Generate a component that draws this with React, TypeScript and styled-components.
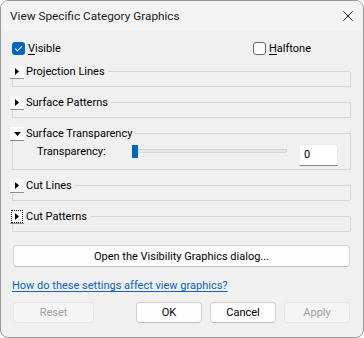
import React from "react";
import styled, { createGlobalStyle } from "styled-components";

const GlobalStyle = createGlobalStyle`
    html, body {
        margin: 0;
        padding: 0;
        background: #ffffff;
    }
    * {
        box-sizing: border-box;
    }
`;

type Section = {
    title: string;
    open?: boolean;
    focused?: boolean;
};

const sections: Section[] = [
    { title: "Projection Lines" },
    { title: "Surface Patterns" },
    { title: "Surface Transparency", open: true },
    { title: "Cut Lines" },
    { title: "Cut Patterns", focused: true },
];

function CheckMark() {
    return (
        <svg width="13" height="13" viewBox="0 0 13 13">
            <path d="M3.2 6.6 L5.4 8.8 L9.9 4.3" fill="none" stroke="#ffffff" strokeWidth="1.1" />
        </svg>
    );
}

function Arrow({ open }: { open?: boolean }) {
    return open ? (
        <svg width="7" height="4" viewBox="0 0 7 4">
            <path d="M0 0 H7 L3.5 4 Z" fill="#000" />
        </svg>
    ) : (
        <svg width="4" height="7" viewBox="0 0 4 7">
            <path d="M0 0 V7 L4 3.5 Z" fill="#000" />
        </svg>
    );
}

function App() {
    return (
        <>
            <GlobalStyle />
            <Window>
                <TitleBar>
                    <Title>View Specific Category Graphics</Title>
                    <CloseButton>
                        <svg width="10" height="10" viewBox="0 0 10 10">
                            <path d="M0.5 0.5 L9.5 9.5 M9.5 0.5 L0.5 9.5" stroke="#1b1b1b" strokeWidth="1" />
                        </svg>
                    </CloseButton>
                </TitleBar>

                <Content>
                    <CheckRow>
                        <CheckLabel>
                            <CheckBox $checked>
                                <CheckMark />
                            </CheckBox>
                            <span><u>V</u>isible</span>
                        </CheckLabel>
                        <CheckLabel>
                            <CheckBox />
                            <span><u>H</u>alftone</span>
                        </CheckLabel>
                    </CheckRow>

                    <Groups>
                        {sections.map((s) => (
                            <Group key={s.title}>
                                <GroupHeader>
                                    <Expander>
                                        {s.focused ? (
                                            <FocusRect>
                                                <Arrow open={s.open} />
                                            </FocusRect>
                                        ) : (
                                            <Arrow open={s.open} />
                                        )}
                                    </Expander>
                                    <GroupTitle>{s.title}</GroupTitle>
                                    <GroupRule />
                                </GroupHeader>
                                <GroupBody $open={s.open}>
                                    {s.open && (
                                        <>
                                            <FieldLabel>Transparency:</FieldLabel>
                                            <Slider>
                                                <Track />
                                                <Thumb />
                                            </Slider>
                                            <NumberBox>0</NumberBox>
                                        </>
                                    )}
                                </GroupBody>
                            </Group>
                        ))}
                    </Groups>

                    <WideButton>Open the Visibility Graphics dialog...</WideButton>

                    <HelpLink>How do these settings affect view graphics?</HelpLink>

                    <ButtonRow>
                        <DialogButton $wide disabled>Reset</DialogButton>
                        <RightButtons>
                            <DialogButton>OK</DialogButton>
                            <DialogButton>Cancel</DialogButton>
                            <DialogButton disabled>Apply</DialogButton>
                        </RightButtons>
                    </ButtonRow>
                </Content>
            </Window>
        </>
    );
}
export default App;

// style
const Window = styled.div`
    width: 364px;
    height: 338px;
    border: 1px solid #9a9a9a;
    border-radius: 8px;
    overflow: hidden;
    background: #f0f0f0;
    display: flex;
    flex-direction: column;
    font-family: Roboto, "Liberation Sans", sans-serif;
    font-size: 11px;
    color: #000;
`;

const TitleBar = styled.div`
    height: 30px;
    flex-shrink: 0;
    display: flex;
    align-items: center;
    padding: 0 9px 1px 9px;
    background: #f3f3f3;
`;

const Title = styled.div`
    flex: 1;
    font-size: 11.8px;
    color: #1a1a1a;
`;

const CloseButton = styled.div`
    width: 10px;
    height: 10px;
    margin-right: 1px;
    display: flex;
`;

const Content = styled.div`
    flex: 1;
    display: flex;
    flex-direction: column;
    padding: 11px 12px 0 9px;
`;

const CheckRow = styled.div`
    display: grid;
    grid-template-columns: 241px auto;
    margin-left: 2px;
    height: 13px;
`;

const CheckLabel = styled.label`
    display: flex;
    align-items: center;
    gap: 3px;
    line-height: 13px;
    u {
        text-decoration-thickness: 1px;
        text-underline-offset: 2px;
    }
`;

const CheckBox = styled.span<{ $checked?: boolean }>`
    width: 13px;
    height: 13px;
    border-radius: 3px;
    display: flex;
    background: ${(p) => (p.$checked ? "#0067c0" : "#fbfbfb")};
    border: ${(p) => (p.$checked ? "none" : "1px solid #6a6a6a")};
`;

const Groups = styled.div`
    display: flex;
    flex-direction: column;
    gap: 9px;
    margin-top: 10px;
`;

const Group = styled.div`
    display: flex;
    flex-direction: column;
`;

const GroupHeader = styled.div`
    height: 14px;
    display: flex;
    align-items: center;
`;

const Expander = styled.div`
    width: 14px;
    height: 14px;
    flex-shrink: 0;
    display: flex;
    align-items: center;
    justify-content: center;
    background: #fbfbfb;
    border-bottom: 1px solid #8e8e8e;
`;

const FocusRect = styled.div`
    width: 10px;
    height: 11px;
    display: flex;
    align-items: center;
    justify-content: center;
    outline: 1px dotted #000;
`;

const GroupTitle = styled.div`
    margin-left: 2px;
    padding-right: 3px;
    line-height: 14px;
    white-space: nowrap;
`;

const GroupRule = styled.div`
    flex: 1;
    align-self: flex-end;
    height: 8px;
    border-top: 1px solid #d7d7d7;
    border-right: 1px solid #d7d7d7;
`;

const GroupBody = styled.div<{ $open?: boolean }>`
    margin-left: 2px;
    height: ${(p) => (p.$open ? "29px" : "8px")};
    border: 1px solid #d7d7d7;
    border-top: none;
    display: grid;
    grid-template-columns: 95px 155px 51px;
    align-items: center;
    padding: 2px 0 3px 24px;
`;

const FieldLabel = styled.div`
    line-height: 14px;
    margin-top: -6px;
`;

const Slider = styled.div`
    position: relative;
    height: 13px;
    display: flex;
    align-items: center;
    margin-top: -7px;
`;

const Track = styled.div`
    flex: 1;
    height: 4px;
    background: #e7e7e7;
    border: 1px solid #d6d6d6;
`;

const Thumb = styled.div`
    position: absolute;
    left: 0;
    top: 0;
    width: 6px;
    height: 13px;
    background: #0067c0;
`;

const NumberBox = styled.div`
    margin-left: 12px;
    height: 22px;
    background: #ffffff;
    border: 1px solid #ececec;
    border-bottom: 1px solid #8a8a8a;
    border-radius: 3px 3px 0 0;
    padding-left: 4px;
    display: flex;
    align-items: center;
    font-size: 11px;
    color: #000;
`;

const WideButton = styled.button`
    margin: 13px 1px 0 3px;
    height: 22px;
    background: #fdfdfd;
    border: 1px solid #d3d3d3;
    border-bottom-color: #bdbdbd;
    border-radius: 4px;
    font: inherit;
    color: #000;
    padding: 0;
`;

const HelpLink = styled.a`
    margin: 12px 0 0 2px;
    line-height: 14px;
    color: #0a64c8;
    text-decoration: underline;
    text-underline-offset: 2px;
    cursor: pointer;
`;

const ButtonRow = styled.div`
    display: flex;
    margin: 9px 1px 0 3px;
`;

const RightButtons = styled.div`
    margin-left: auto;
    display: flex;
    gap: 8px;
`;

const DialogButton = styled.button<{ $wide?: boolean }>`
    width: ${(p) => (p.$wide ? "81px" : "66px")};
    height: 21px;
    padding: 0;
    font: inherit;
    border-radius: 4px;
    background: #fdfdfd;
    border: 1px solid #d3d3d3;
    border-bottom-color: #bdbdbd;
    color: #000;

    &:disabled {
        background: #f5f5f5;
        border-color: #e5e5e5;
        color: #a0a0a8;
    }
`;
